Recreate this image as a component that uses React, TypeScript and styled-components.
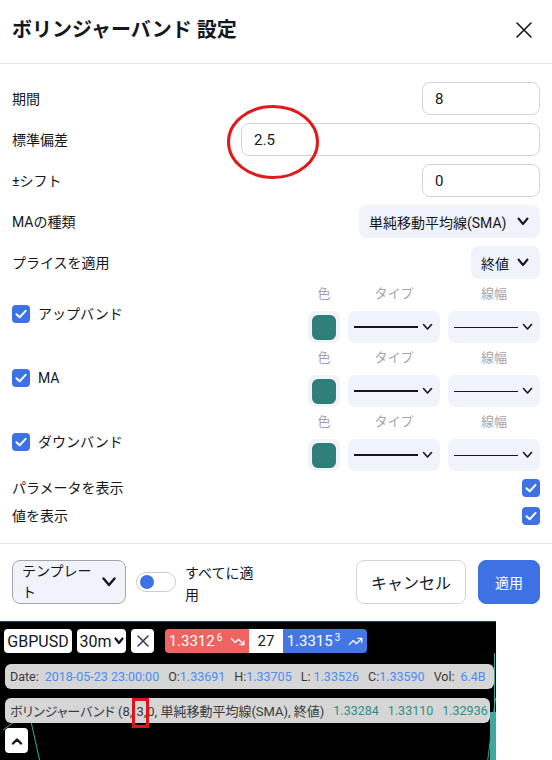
import React from "react";
import styled, { createGlobalStyle } from "styled-components";
import { TrendingDown, TrendingUp } from "lucide-react";

const GlobalStyle = createGlobalStyle`
  html, body { margin: 0; padding: 0; background: #ffffff; }
  body { font-family: Roboto, "Noto Sans CJK JP", sans-serif; color: #131722; }
  * { box-sizing: border-box; }
`;

const Page = styled.div`
  width: 552px;
  height: 760px;
  overflow: hidden;
  background: #fff;
  display: flex;
  flex-direction: column;
`;

const Dialog = styled.div`
  width: 552px;
  height: 621px;
  flex: none;
  display: flex;
  flex-direction: column;
  background: #fff;
`;

const Header = styled.div`
  height: 64px;
  flex: none;
  display: flex;
  align-items: center;
  justify-content: space-between;
  padding: 0 19px 3px 12px;
  border-bottom: 1px solid #e0e3eb;
`;

const Title = styled.h1`
  margin: 0;
  font-size: 20px;
  line-height: 26px;
  font-weight: 700;
  color: #131722;
`;

const Body = styled.div`
  flex: none;
  display: flex;
  flex-direction: column;
  padding: 18px 12px 13px 12px;
`;

const FieldList = styled.div`
  display: flex;
  flex-direction: column;
  gap: 8px;
`;

const Row = styled.div<{ $h?: number }>`
  height: ${(p) => p.$h ?? 33}px;
  display: flex;
  align-items: center;
  justify-content: space-between;
`;

const Label = styled.span`
  font-size: 14px;
  line-height: 20px;
  color: #131722;
`;

const InputWrap = styled.div`
  position: relative;
  display: flex;
`;

const TextInput = styled.input<{ $w: number }>`
  width: ${(p) => p.$w}px;
  height: 33px;
  border: 1px solid #d1d4dc;
  border-radius: 8px;
  padding: 0 12px;
  font-family: Roboto, "Noto Sans CJK JP", sans-serif;
  font-size: 15px;
  color: #131722;
  background: #fff;
  outline: none;
`;

const Annotation = styled.svg`
  position: absolute;
  left: -14px;
  top: -18px;
  overflow: visible;
  pointer-events: none;
`;

const Select = styled.div<{ $w: number }>`
  width: ${(p) => p.$w}px;
  height: 33px;
  border-radius: 8px;
  background: #f0f3fa;
  display: flex;
  align-items: center;
  justify-content: space-between;
  padding: 0 11px 0 10px;
  font-size: 14px;
  color: #131722;
`;

const Groups = styled.div`
  display: flex;
  flex-direction: column;
  gap: 6px;
  margin-top: 6px;
`;

const Group = styled.div`
  display: grid;
  grid-template-columns: 1fr 232px;
  grid-template-rows: 18px 32px;
  row-gap: 8px;
`;

const CheckLabel = styled.div`
  grid-row: 1 / span 2;
  grid-column: 1;
  align-self: center;
  display: flex;
  align-items: center;
  gap: 8px;
  font-size: 14px;
  line-height: 20px;
`;

const ColHeads = styled.div`
  grid-row: 1;
  grid-column: 2;
  display: grid;
  grid-template-columns: 32px 92px 92px;
  column-gap: 8px;
  font-size: 13px;
  line-height: 18px;
  color: #a3a6af;
  text-align: center;
`;

const Controls = styled.div`
  grid-row: 2;
  grid-column: 2;
  display: grid;
  grid-template-columns: 32px 92px 92px;
  column-gap: 8px;
`;

const SwatchBox = styled.div`
  height: 32px;
  border-radius: 8px;
  background: #f0f3fa;
  display: flex;
  align-items: center;
  justify-content: center;
`;

const Swatch = styled.div<{ $color: string }>`
  width: 24px;
  height: 25px;
  border-radius: 6px;
  background: ${(p) => p.$color};
`;

const LineSelect = styled.div`
  height: 32px;
  border-radius: 8px;
  background: #f0f3fa;
  display: flex;
  align-items: center;
  justify-content: space-between;
  padding: 0 7px 0 6px;
`;

const LineSample = styled.div<{ $t: number }>`
  width: 64px;
  height: ${(p) => p.$t}px;
  background: #131722;
`;

const CheckBox = styled.div`
  width: 18px;
  height: 18px;
  border-radius: 4px;
  background: #3e71e3;
  display: flex;
  align-items: center;
  justify-content: center;
  flex: none;
`;

const BottomChecks = styled.div`
  display: flex;
  flex-direction: column;
  margin-top: 3px;
`;

const Footer = styled.div`
  flex: 1;
  border-top: 1px solid #e0e3eb;
  padding: 16px 12px 0 12px;
  display: flex;
  align-items: flex-start;
`;

const TemplateButton = styled.div`
  width: 114px;
  height: 44px;
  border: 1px solid #a3a6af;
  border-radius: 8px;
  background: #f0f3fa;
  display: flex;
  align-items: center;
  justify-content: space-between;
  padding: 0 9px 0 9px;
  flex: none;
`;

const TemplateText = styled.span`
  width: 74px;
  font-size: 14px;
  line-height: 21px;
  color: #131722;
`;

const ToggleTrack = styled.div`
  margin: 12px 0 0 10px;
  width: 40px;
  height: 20px;
  border: 1px solid #c9ccd4;
  border-radius: 10px;
  background: #fff;
  display: flex;
  align-items: center;
  padding-left: 3px;
  flex: none;
`;

const ToggleKnob = styled.div`
  width: 14px;
  height: 14px;
  border-radius: 50%;
  background: #3e71e3;
`;

const ToggleLabel = styled.span`
  margin: 2px 0 0 9px;
  width: 72px;
  font-size: 14px;
  line-height: 22px;
  color: #131722;
`;

const Spacer = styled.div`
  flex: 1;
`;

const Button = styled.div<{ $primary?: boolean; $w: number }>`
  width: ${(p) => p.$w}px;
  height: 44px;
  border-radius: 8px;
  border: 1px solid ${(p) => (p.$primary ? "#3e71e3" : "#d1d4dc")};
  background: ${(p) => (p.$primary ? "#3e71e3" : "#fff")};
  color: ${(p) => (p.$primary ? "#fff" : "#131722")};
  font-size: ${(p) => (p.$primary ? 14 : 16)}px;
  display: flex;
  align-items: center;
  justify-content: center;
  margin-left: ${(p) => (p.$primary ? 12 : 0)}px;
  flex: none;
`;

/* ---------- chart ---------- */

const Chart = styled.div`
  position: relative;
  width: 496px;
  height: 139px;
  flex: none;
  background: #000;
  border-top: 1px solid #2a2ad8;
  padding: 7px 0 0 4px;
  display: flex;
  flex-direction: column;
  align-items: flex-start;
  font-family: Roboto, "Noto Sans CJK JP", sans-serif;
`;

const ChartCanvas = styled.svg`
  position: absolute;
  left: 0;
  top: 0;
`;

const ToolRow = styled.div`
  position: relative;
  display: flex;
  align-items: center;
  gap: 5px;
  height: 24px;
`;

const Chip = styled.div<{ $w: number }>`
  width: ${(p) => p.$w}px;
  height: 24px;
  border-radius: 4px;
  background: #fff;
  display: flex;
  align-items: center;
  justify-content: center;
  gap: 2px;
  font-size: 16px;
  color: #131722;
`;

const PriceWidget = styled.div`
  margin-left: 6px;
  display: flex;
  height: 24px;
  border-radius: 4px;
  overflow: hidden;
  font-size: 15px;
`;

const PriceCell = styled.div<{ $bg: string; $fg: string; $w: number }>`
  width: ${(p) => p.$w}px;
  background: ${(p) => p.$bg};
  color: ${(p) => p.$fg};
  display: flex;
  align-items: center;
  justify-content: center;
  gap: 8px;
  sup {
    font-size: 10px;
    line-height: 0;
    vertical-align: 5px;
    margin-left: 2px;
  }
`;

const InfoBar = styled.div<{ $w: number; $mt: number }>`
  position: relative;
  margin: ${(p) => p.$mt}px 0 0 1px;
  width: ${(p) => p.$w}px;
  height: 25px;
  border-radius: 6px;
  background: #d6d6d6;
  display: flex;
  align-items: center;
  padding: 0 5px;
  font-size: 12.5px;
  color: #3a3a3a;
  white-space: nowrap;
`;

const Pair = styled.span`
  margin-right: 9px;
`;

const StudyName = styled.span`
  font-size: 13px;
  font-feature-settings: "palt";
`;

const Val = styled.span<{ $color: string; $ml?: number }>`
  color: ${(p) => p.$color};
  margin-left: ${(p) => p.$ml ?? 0}px;
`;

const Marked = styled.span`
  position: relative;
  display: inline-block;
  margin: 0 1px 0 4px;
`;

const MarkBox = styled.span`
  position: absolute;
  left: -4px;
  right: -3px;
  top: -6px;
  bottom: -9px;
  border: 3px solid #e01414;
`;

const UpButton = styled.div`
  position: relative;
  margin: 5px 0 0 1px;
  width: 23px;
  height: 25px;
  border-radius: 4px;
  background: #fff;
  display: flex;
  align-items: center;
  justify-content: center;
`;

const Chevron = ({ w = 12, h = 7, sw = 2 }: { w?: number; h?: number; sw?: number }) => (
  <svg width={w} height={h + 2} viewBox={`0 0 ${w} ${h + 2}`} fill="none">
    <path
      d={`M1.5 1.5 L${w / 2} ${h} L${w - 1.5} 1.5`}
      stroke="#131722"
      strokeWidth={sw}
      strokeLinecap="round"
      strokeLinejoin="round"
    />
  </svg>
);

const Check = () => (
  <svg width="18" height="18" viewBox="0 0 18 18" fill="none">
    <path d="M4.5 9.2 L7.7 12.3 L13.6 5.9" stroke="#fff" strokeWidth="2" strokeLinecap="round" strokeLinejoin="round" />
  </svg>
);

const CloseIcon = () => (
  <svg width="18" height="18" viewBox="0 0 18 18" fill="none">
    <path d="M2 2 L16 16 M16 2 L2 16" stroke="#131722" strokeWidth="1.6" strokeLinecap="round" />
  </svg>
);

const SmallX = () => (
  <svg width="14" height="14" viewBox="0 0 14 14" fill="none">
    <path d="M2 2 L12 12 M12 2 L2 12" stroke="#3a3f5a" strokeWidth="1.6" strokeLinecap="round" />
  </svg>
);

const TEAL = "#2f7e7a";
const BLUE_VAL = "#4d8cf2";
const TEAL_VAL = "#2e9085";

const lineGroups = [{ name: "アップバンド" }, { name: "MA" }, { name: "ダウンバンド" }];

const ohlc = [
  { k: "O:", v: "1.33691" },
  { k: "H:", v: "1.33705" },
  { k: "L: ", v: "1.33526" },
  { k: "C:", v: "1.33590" },
];

const bandValues = ["1.33284", "1.33110", "1.32936"];

export default function App() {
  return (
    <Page>
      <GlobalStyle />
      <Dialog>
        <Header>
          <Title>ボリンジャーバンド 設定</Title>
          <CloseIcon />
        </Header>
        <Body>
          <FieldList>
            <Row>
              <Label>期間</Label>
              <TextInput $w={118} readOnly value="8" />
            </Row>
            <Row>
              <Label>標準偏差</Label>
              <InputWrap>
                <TextInput $w={299} readOnly value="2.5" />
                <Annotation width="92" height="74" viewBox="0 0 92 74">
                  <ellipse cx="46" cy="37" rx="44.5" ry="35.5" fill="none" stroke="#e0191c" strokeWidth="3" />
                </Annotation>
              </InputWrap>
            </Row>
            <Row>
              <Label>±シフト</Label>
              <TextInput $w={118} readOnly value="0" />
            </Row>
            <Row>
              <Label>MAの種類</Label>
              <Select $w={181}>
                <span>単純移動平均線(SMA)</span>
                <Chevron />
              </Select>
            </Row>
            <Row>
              <Label>プライスを適用</Label>
              <Select $w={69}>
                <span>終値</span>
                <Chevron />
              </Select>
            </Row>
          </FieldList>
          <Groups>
            {lineGroups.map((g) => (
              <Group key={g.name}>
                <CheckLabel>
                  <CheckBox>
                    <Check />
                  </CheckBox>
                  <span>{g.name}</span>
                </CheckLabel>
                <ColHeads>
                  <span>色</span>
                  <span>タイプ</span>
                  <span>線幅</span>
                </ColHeads>
                <Controls>
                  <SwatchBox>
                    <Swatch $color={TEAL} />
                  </SwatchBox>
                  <LineSelect>
                    <LineSample $t={2} />
                    <Chevron w={11} h={6} sw={1.6} />
                  </LineSelect>
                  <LineSelect>
                    <LineSample $t={1} />
                    <Chevron w={11} h={6} sw={1.6} />
                  </LineSelect>
                </Controls>
              </Group>
            ))}
          </Groups>
          <BottomChecks>
            <Row $h={28}>
              <Label>パラメータを表示</Label>
              <CheckBox>
                <Check />
              </CheckBox>
            </Row>
            <Row $h={28}>
              <Label>値を表示</Label>
              <CheckBox>
                <Check />
              </CheckBox>
            </Row>
          </BottomChecks>
        </Body>
        <Footer>
          <TemplateButton>
            <TemplateText>テンプレート</TemplateText>
            <Chevron w={14} h={8} sw={2.4} />
          </TemplateButton>
          <ToggleTrack>
            <ToggleKnob />
          </ToggleTrack>
          <ToggleLabel>すべてに適用</ToggleLabel>
          <Spacer />
          <Button $w={110}>キャンセル</Button>
          <Button $w={62} $primary>
            適用
          </Button>
        </Footer>
      </Dialog>
      <Chart>
        <ChartCanvas width="496" height="138" viewBox="0 0 496 138">
          <polyline points="3,108 21,95 30,95 40,140" fill="none" stroke="#3aa79a" strokeWidth="1" />
          <line x1="494.5" y1="31" x2="494.5" y2="140" stroke="#3aa79a" strokeWidth="1" />
          <line x1="487.5" y1="140" x2="495.5" y2="76" stroke="#3aa79a" strokeWidth="1" />
          <rect x="490" y="90" width="6" height="50" fill="#3ea89a" />
        </ChartCanvas>
        <ToolRow>
          <Chip $w={68}>GBPUSD</Chip>
          <Chip $w={49}>
            30m
            <Chevron w={10} h={6} sw={2.2} />
          </Chip>
          <Chip $w={23}>
            <SmallX />
          </Chip>
          <PriceWidget>
            <PriceCell $bg="#ef6460" $fg="#fff" $w={84}>
              <span>
                1.3312<sup>6</sup>
              </span>
              <TrendingDown size={15} strokeWidth={2} />
            </PriceCell>
            <PriceCell $bg="#fff" $fg="#131722" $w={34}>
              27
            </PriceCell>
            <PriceCell $bg="#4577e4" $fg="#fff" $w={84}>
              <span>
                1.3315<sup>3</sup>
              </span>
              <TrendingUp size={15} strokeWidth={2} />
            </PriceCell>
          </PriceWidget>
        </ToolRow>
        <InfoBar $w={489} $mt={11}>
          <Pair>
            Date:<Val $color={BLUE_VAL} $ml={6}>2018-05-23 23:00:00</Val>
          </Pair>
          {ohlc.map((o) => (
            <Pair key={o.k}>
              {o.k}
              <Val $color={BLUE_VAL}>{o.v}</Val>
            </Pair>
          ))}
          <span>
            Vol:<Val $color={BLUE_VAL} $ml={6}>6.4B</Val>
          </span>
        </InfoBar>
        <InfoBar $w={485} $mt={9}>
          <StudyName>
            ボリンジャーバンド (8,
            <Marked>
              3,
              <MarkBox />
            </Marked>
            0, 単純移動平均線(SMA), 終値)
          </StudyName>
          {bandValues.map((v) => (
            <Val key={v} $color={TEAL_VAL} $ml={9}>
              {v}
            </Val>
          ))}
        </InfoBar>
        <UpButton>
          <svg width="12" height="8" viewBox="0 0 12 8" fill="none">
            <path d="M2 6.5 L6 2.5 L10 6.5" stroke="#131722" strokeWidth="2.4" strokeLinecap="round" strokeLinejoin="round" />
          </svg>
        </UpButton>
      </Chart>
    </Page>
  );
}
